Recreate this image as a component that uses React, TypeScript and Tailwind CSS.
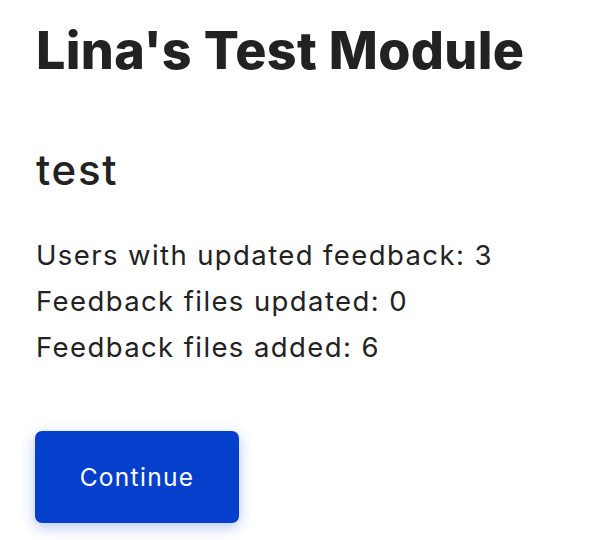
import React from 'react';

const stats = [
  { label: 'Users with updated feedback', value: 3 },
  { label: 'Feedback files updated', value: 0 },
  { label: 'Feedback files added', value: 6 },
];

export default function App() {
  return (
    <div className="min-h-[540px] bg-white px-9 pt-[19px] font-['Inter',sans-serif] text-[#222222]">
      <h1 className="text-[52px] font-extrabold leading-[64px] tracking-[0.35px]">Lina's Test Module</h1>

      <h2 className="mt-[61px] text-[42px] font-medium leading-[52px] tracking-[1.7px]">test</h2>

      <div className="mt-[36px] text-[27.5px] leading-[46px] tracking-[1.4px]">
        {stats.map((s) => (
          <p key={s.label}>
            {s.label}: {s.value}
          </p>
        ))}
      </div>

      <button className="-ml-px mt-[61px] h-[92px] w-[204px] rounded-[7px] bg-[#0540cc] text-[24.5px] tracking-[1.3px] text-white shadow-[0_4px_14px_rgba(5,64,204,0.3)]">
        Continue
      </button>
    </div>
  );
}
